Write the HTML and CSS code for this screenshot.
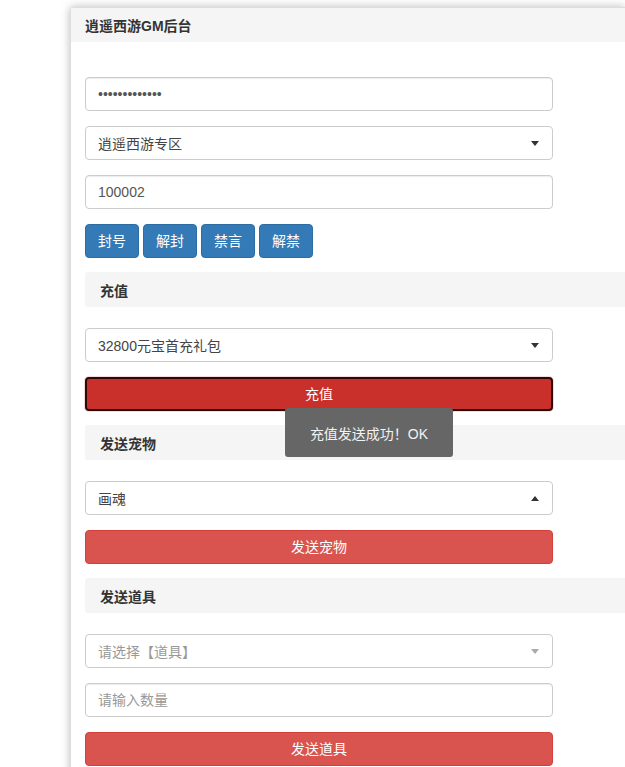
FILE: index.html
```html
<!DOCTYPE html>
<html lang="zh-CN">
<head>
<meta charset="utf-8">
<title>逍遥西游GM后台</title>
<link rel="stylesheet" href="styles.css">
</head>
<body>
<div class="panel">
  <div class="panel-heading">逍遥西游GM后台</div>
  <div class="panel-body">
    <div class="form">
      <input class="field" type="password" value="1234567890123">
      <div class="select"><span class="sel-text">逍遥西游专区</span><i class="caret"></i></div>
      <input class="field" type="text" value="100002">
      <div class="btn-row">
        <button class="btn btn-primary">封号</button>
        <button class="btn btn-primary">解封</button>
        <button class="btn btn-primary">禁言</button>
        <button class="btn btn-primary">解禁</button>
      </div>
      <div class="section">充值</div>
      <div class="select"><span class="sel-text">32800元宝首充礼包</span><i class="caret"></i></div>
      <button class="btn btn-danger btn-block is-active">充值</button>
      <div class="section">发送宠物</div>
      <div class="select"><span class="sel-text">画魂</span><i class="caret caret-up"></i></div>
      <button class="btn btn-danger btn-block">发送宠物</button>
      <div class="section">发送道具</div>
      <div class="select"><span class="sel-text placeholder">请选择【道具】</span><i class="caret caret-light"></i></div>
      <input class="field" type="text" placeholder="请输入数量">
      <button class="btn btn-danger btn-block">发送道具</button>
    </div>
  </div>
</div>
<div class="toast">充值发送成功！OK</div>
</body>
</html>
```

FILE: styles.css
```css
html {
  overflow: hidden;
}
body {
  margin: 0;
  background: #fff;
  font-family: "Liberation Sans", "Noto Sans CJK SC", sans-serif;
  font-size: 14px;
  color: #333;
}
.panel {
  margin: 7px 0 0 70px;
  border: 1px solid #ddd;
  border-right: 0;
  border-radius: 4px 0 0 0;
  background: #fff;
  box-shadow: 0 0 10px rgba(0, 0, 0, 0.28);
}
.panel-heading {
  height: 34px;
  padding: 0 14px;
  display: flex;
  align-items: center;
  background: #f5f5f5;
  font-weight: bold;
  font-size: 14px;
  color: #333;
}
.panel-body {
  padding: 35px 0 20px 14px;
}
.form {
  display: flex;
  flex-direction: column;
  align-items: flex-start;
  gap: 15px;
}
.field,
.select {
  width: 468px;
  height: 34px;
  box-sizing: border-box;
  margin: 0;
  padding: 0 12px;
  border: 1px solid #ccc;
  border-radius: 4px;
  background: #fff;
  box-shadow: inset 0 1px 1px rgba(0, 0, 0, 0.075);
  font-family: inherit;
  font-size: 14px;
  color: #555;
  outline: none;
}
.field::placeholder {
  color: #999;
}
.select {
  display: flex;
  align-items: center;
  justify-content: space-between;
  box-shadow: none;
  color: #444;
}
.sel-text.placeholder {
  color: #999;
}
.caret {
  width: 0;
  height: 0;
  margin-right: 1px;
  border-style: solid;
  border-width: 5px 4px 0 4px;
  border-color: #333 transparent transparent transparent;
}
.caret-up {
  border-width: 0 4px 5px 4px;
  border-color: transparent transparent #333 transparent;
}
.caret-light {
  border-color: #aaa transparent transparent transparent;
}
.btn-row {
  display: flex;
  gap: 4px;
}
.btn {
  height: 34px;
  box-sizing: border-box;
  margin: 0;
  padding: 0 12px;
  border: 1px solid transparent;
  border-radius: 4px;
  font-family: inherit;
  font-size: 14px;
  line-height: 20px;
  color: #fff;
  cursor: pointer;
}
.btn-primary {
  background: #337ab7;
  border-color: #2e6da4;
}
.btn-danger {
  background: #d9534f;
  border-color: #d43f3a;
}
.btn-block {
  width: 468px;
}
.btn-danger.is-active {
  background: #c9302c;
  border: 2px solid #2e0807;
  box-shadow: 0 0 0 1px #f3dcdc;
}
.section {
  align-self: stretch;
  height: 35px;
  margin: -1px 0 6px;
  padding: 0 15px;
  display: flex;
  align-items: center;
  background: #f5f5f5;
  border-radius: 3px 0 0 3px;
  font-weight: bold;
  color: #333;
}
.toast {
  position: absolute;
  left: 285px;
  top: 408px;
  width: 168px;
  height: 49px;
  display: flex;
  align-items: center;
  justify-content: center;
  background: #666;
  border-radius: 3px;
  color: #f2f2f2;
  font-size: 14px;
}
```
